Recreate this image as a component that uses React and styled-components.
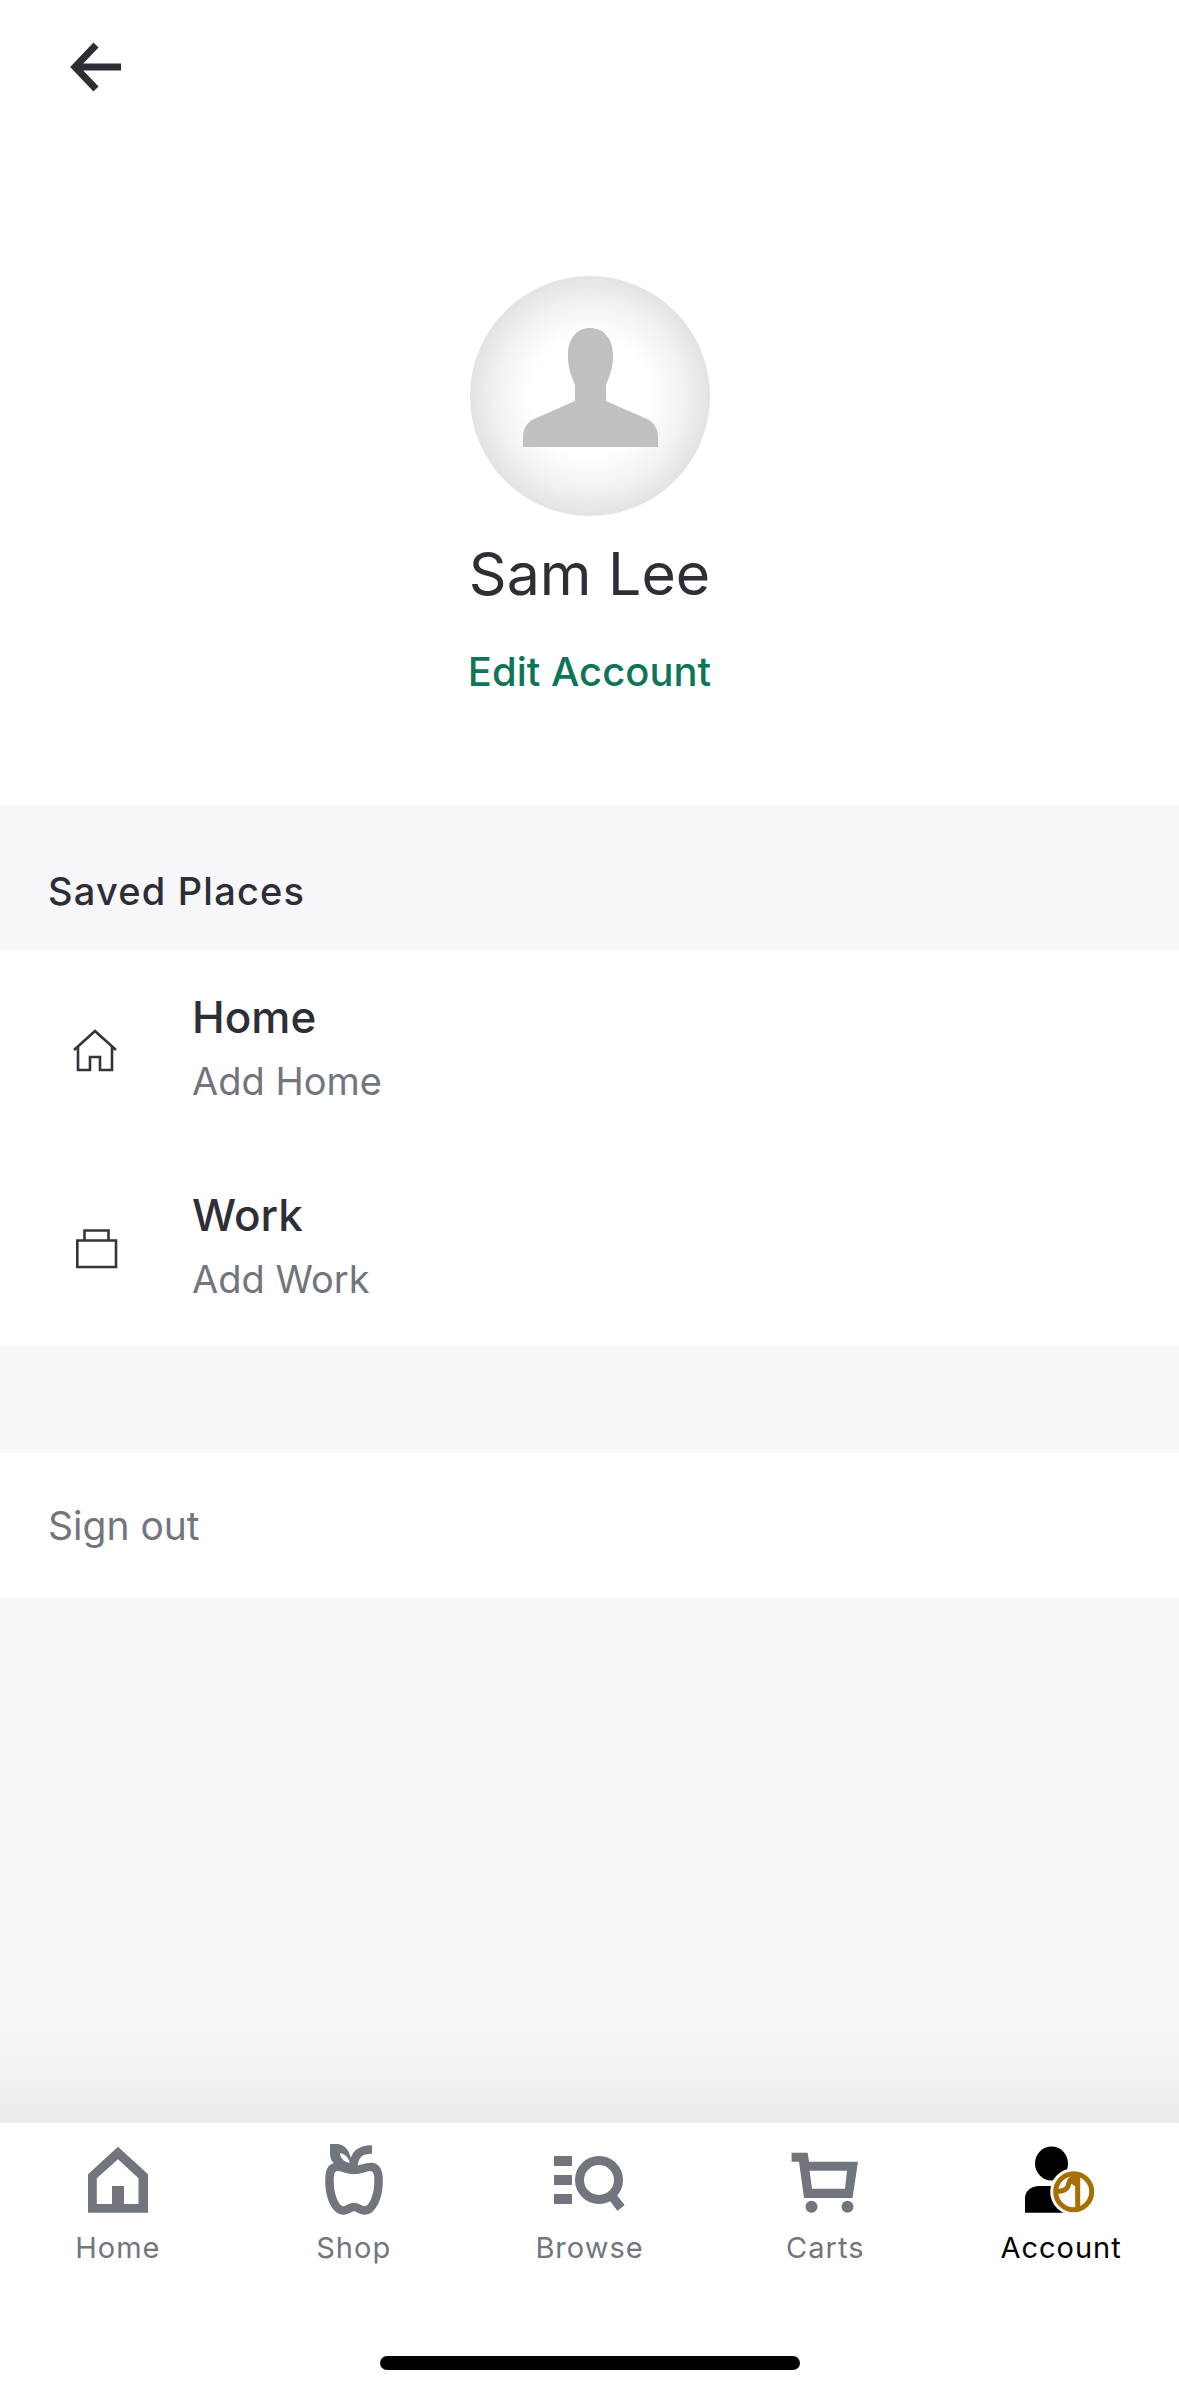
import React from "react";
import styled, { createGlobalStyle } from "styled-components";

const GlobalStyle = createGlobalStyle`
  html, body {
    margin: 0;
    padding: 0;
    background: #fff;
  }
  * {
    box-sizing: border-box;
  }
`;

const places = [
  { title: "Home", sub: "Add Home", icon: "home" },
  { title: "Work", sub: "Add Work", icon: "work" },
];

const HomeTabIcon = () => (
  <svg width="80" height="72" viewBox="0 0 80 72" fill="#72757e">
    <path
      fillRule="evenodd"
      d="M40 2.7 70 30.3V68.7H10V30.3ZM40 15.3 60.5 34.3V60H46V42H34V60H18.8V34.3Z"
    />
  </svg>
);

const ShopTabIcon = () => (
  <svg width="80" height="72" viewBox="0 0 80 72" fill="#72757e">
    <path
      fill="none"
      stroke="#72757e"
      strokeWidth="8.5"
      d="M40 26C32 26 28 22 22 23 15 24 15.5 32 15.5 40 16 52 21 66 29 66.5 33 67 36 63 40 63 44 63 47 67 51 66.5 59 66 64 52 64.5 40 65 32 64 24 58 23 52 22 48 26 40 26Z"
    />
    <path
      fillRule="evenodd"
      d="M16 0H24C33 1 38 10 38 25 26 26 16 20 16 10ZM26 9C26 14 30 18 36 19 35 14 31 10 26 9Z"
    />
    <path
      fill="none"
      stroke="#72757e"
      strokeWidth="8.5"
      d="M58 5.5C46 5.5 40 10 39 24"
    />
  </svg>
);

const BrowseTabIcon = () => (
  <svg width="80" height="72" viewBox="0 0 80 72" fill="#72757e">
    <rect x="5" y="12" width="18" height="10" />
    <rect x="5" y="31" width="18" height="10" />
    <rect x="5" y="50" width="18" height="10" />
    <circle cx="50" cy="36" r="19.5" fill="none" stroke="#72757e" strokeWidth="9" />
    <path d="M63 52 72 64" fill="none" stroke="#72757e" strokeWidth="9" />
  </svg>
);

const CartsTabIcon = () => (
  <svg width="80" height="72" viewBox="0 0 80 72" fill="#72757e">
    <path
      fillRule="evenodd"
      d="M6.6 8.7H22.7L24 17.7H73L67.5 54H19L14 17.7H6.6ZM24.6 26.7 27 44.7H60L62 26.7Z"
    />
    <circle cx="26.5" cy="62.7" r="6" />
    <circle cx="62.5" cy="62.7" r="6" />
  </svg>
);

const AccountTabIcon = () => (
  <svg width="80" height="72" viewBox="0 0 80 72">
    <ellipse cx="30.5" cy="19.5" rx="16.5" ry="17" fill="#000" />
    <path d="M4 68.7V54C4 47 10 42 18 42H44V68.7Z" fill="#000" />
    <circle cx="52.7" cy="47.7" r="23.5" fill="#fff" />
    <circle cx="52.7" cy="47.7" r="18" fill="#fff" stroke="#a66f00" strokeWidth="5" />
    <path
      d="M34 47.5C43 47.5 47 45.5 47.5 40 48 35.5 52 33.5 56.7 32V66"
      fill="none"
      stroke="#a66f00"
      strokeWidth="5"
    />
    <path d="M49 40C50 36 53 34.5 56 33.5V44C53 41.500 52 40 49 40Z" fill="#a66f00" />
  </svg>
);

const tabs = [
  { label: "Home", Icon: HomeTabIcon },
  { label: "Shop", Icon: ShopTabIcon },
  { label: "Browse", Icon: BrowseTabIcon },
  { label: "Carts", Icon: CartsTabIcon },
  { label: "Account", Icon: AccountTabIcon, active: true },
];

const App = () => {
  return (
    <Page>
      <GlobalStyle />
      <TopBar>
        <svg width="56" height="52" viewBox="0 0 56 52" fill="none">
          <path
            d="M27 4 6 26 27 48M7 26H52"
            stroke="#2e2f36"
            strokeWidth="7"
          />
        </svg>
      </TopBar>
      <Profile>
        <Avatar>
          <svg width="136" height="120" viewBox="0 0 136 120" fill="#c0c0c0">
            <path d="M68 1C55 1 46 11 46 28 46 42 49 48 53 58V74L12 92C5 95 1 102 1 110V120H136V110C136 102 132 95 125 92L84 74V58C88 48 91 42 91 28 91 11 81 1 68 1Z" />
          </svg>
        </Avatar>
        <Name>Sam Lee</Name>
        <EditLink>Edit Account</EditLink>
      </Profile>
      <SectionHeader>Saved Places</SectionHeader>
      <List>
        {places.map((p) => (
          <Row key={p.title}>
            <RowIcon>
              {p.icon === "home" ? (
                <svg width="60" height="60" viewBox="0 0 60 60" fill="none">
                  <path
                    d="M9 29 30 10 51 29M13 26V49H25V36H35V49H47V26"
                    stroke="#33343c"
                    strokeWidth="2.6"
                  />
                </svg>
              ) : (
                <svg width="60" height="60" viewBox="0 0 60 60" fill="none">
                  <path
                    d="M12.3 21.5H51V48H12.3ZM19.5 21.5V11.5H43.5V21.5"
                    stroke="#33343c"
                    strokeWidth="2.6"
                  />
                </svg>
              )}
            </RowIcon>
            <RowText>
              <RowTitle>{p.title}</RowTitle>
              <RowSub>{p.sub}</RowSub>
            </RowText>
          </Row>
        ))}
      </List>
      <Spacer />
      <SignOut>Sign out</SignOut>
      <Filler />
      <TabBar>
        <Tabs>
          {tabs.map(({ label, Icon, active }) => (
            <Tab key={label}>
              <Icon />
              <TabLabel $active={active}>{label}</TabLabel>
            </Tab>
          ))}
        </Tabs>
        <HomeIndicator />
      </TabBar>
    </Page>
  );
};

export default App;

const Page = styled.div`
  width: 1179px;
  height: 2396px;
  display: flex;
  flex-direction: column;
  background: #fff;
  overflow: hidden;
  font-family: Inter, "Liberation Sans", sans-serif;
`;

const TopBar = styled.div`
  height: 276px;
  padding: 41px 0 0 69px;
`;

const Profile = styled.div`
  height: 529px;
  display: flex;
  flex-direction: column;
  align-items: center;
`;

const Avatar = styled.div`
  width: 240px;
  height: 240px;
  flex: none;
  border-radius: 50%;
  background: radial-gradient(
    circle closest-side,
    #fff 50%,
    #f2f2f2 78%,
    #e3e3e3 100%
  );
  display: flex;
  justify-content: center;
  padding-top: 51px;
`;

const Name = styled.div`
  margin-top: 22px;
  font-size: 59px;
  line-height: 72px;
  color: #2e2f36;
`;

const EditLink = styled.div`
  margin-top: 38px;
  font-size: 40px;
  line-height: 48px;
  font-weight: 500;
  color: #0f7558;
`;

const SectionHeader = styled.div`
  height: 145px;
  flex: none;
  padding: 62px 0 0 48px;
  background: #f7f7f9;
  font-size: 38px;
  line-height: 48px;
  font-weight: 500;
  letter-spacing: 1.2px;
  color: #2e2f36;
`;

const List = styled.div`
  display: flex;
  flex-direction: column;
`;

const Row = styled.div`
  height: 198px;
  display: flex;
  align-items: center;
`;

const RowIcon = styled.div`
  width: 192px;
  flex: none;
  padding: 3px 0 0 65px;
  display: flex;
`;

const RowText = styled.div`
  display: flex;
  flex-direction: column;
`;

const RowTitle = styled.div`
  font-size: 44px;
  line-height: 64px;
  font-weight: 500;
  color: #2e2f36;
`;

const RowSub = styled.div`
  font-size: 38px;
  line-height: 64px;
  color: #72757e;
`;

const Spacer = styled.div`
  height: 107px;
  flex: none;
  background: #f7f7f9;
`;

const SignOut = styled.div`
  height: 145px;
  flex: none;
  display: flex;
  align-items: center;
  padding-left: 48px;
  font-size: 39px;
  color: #72757e;
`;

const Filler = styled.div`
  flex: 1;
  background: linear-gradient(
    to bottom,
    #f7f7f9 0,
    #f7f7f9 calc(100% - 130px),
    #f3f3f5 calc(100% - 60px),
    #ebebec 100%
  );
`;

const TabBar = styled.div`
  height: 273px;
  flex: none;
  background: #fff;
  display: flex;
  flex-direction: column;
  align-items: center;
`;

const Tabs = styled.div`
  width: 100%;
  display: grid;
  grid-template-columns: repeat(5, 1fr);
  padding-top: 21px;
`;

const Tab = styled.div`
  display: flex;
  flex-direction: column;
  align-items: center;
`;

const TabLabel = styled.div`
  margin-top: 14px;
  font-size: 29px;
  line-height: 36px;
  letter-spacing: 1px;
  color: ${(p) => (p.$active ? "#000" : "#72757e")};
`;

const HomeIndicator = styled.div`
  width: 420px;
  height: 14px;
  margin-top: 90px;
  border-radius: 7px;
  background: #000;
`;
